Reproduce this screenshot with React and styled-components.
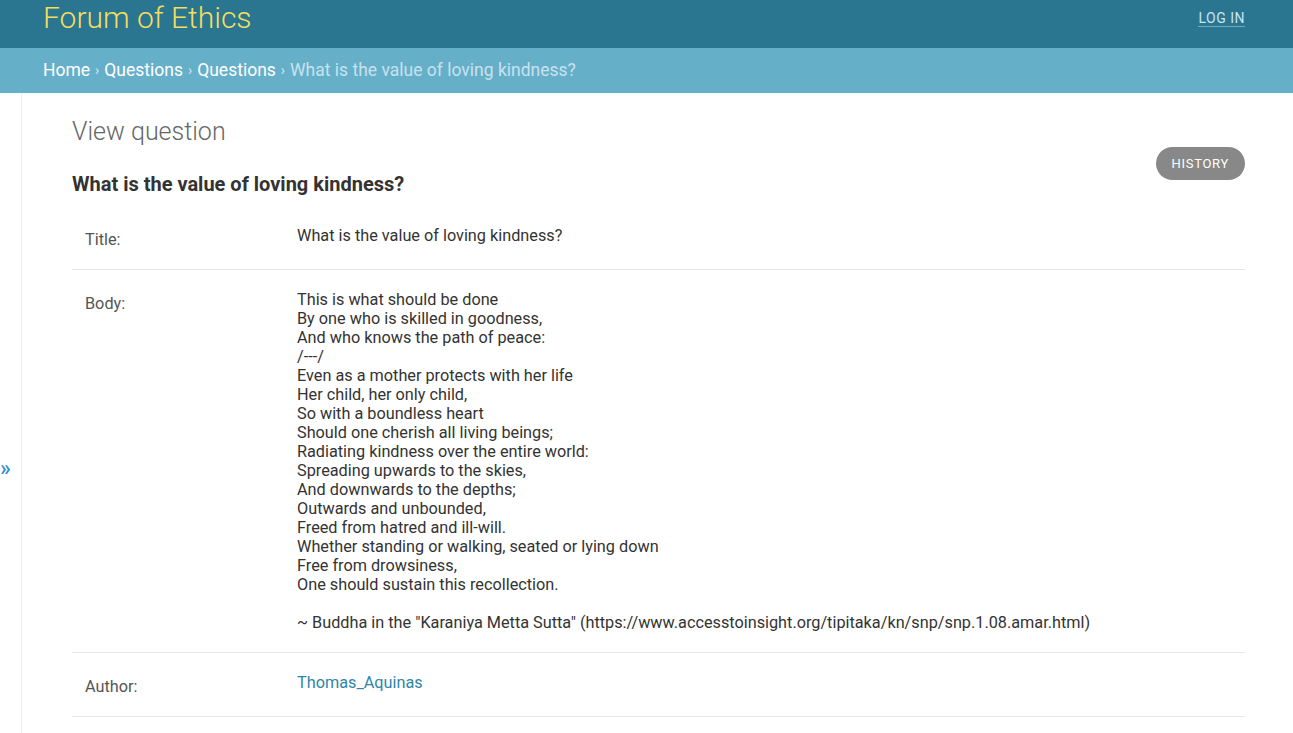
import React from 'react';
import styled, { createGlobalStyle } from 'styled-components';

const GlobalStyle = createGlobalStyle`
  html, body {
    margin: 0;
    padding: 0;
    background: #fff;
    font-family: Roboto, "Liberation Sans", sans-serif;
    color: #333;
  }
`;

const Header = styled.div`
  height: 48px;
  background: #2a7590;
  display: flex;
  align-items: center;
  justify-content: space-between;
  padding: 0 48px 0 43px;
  box-sizing: border-box;
`;

const Brand = styled.div`
  font-size: 30px;
  font-weight: 300;
  color: #f5dd5d;
  margin-top: -13px;
`;

const Login = styled.a`
  font-size: 14px;
  color: #c6e6f2;
  text-transform: uppercase;
  letter-spacing: 0.5px;
  text-decoration: none;
  border-bottom: 1px solid rgba(198, 230, 242, 0.45);
  line-height: 16px;
  margin-top: -12px;
`;

const Crumbs = styled.div`
  height: 45px;
  background: #66afc9;
  display: flex;
  align-items: center;
  padding: 0 43px 2px;
  box-sizing: border-box;
  font-size: 17.5px;
  color: #c8e2ee;
`;

const Crumb = styled.a`
  color: #fff;
  text-decoration: none;
`;

const Sep = styled.span`
  color: #d3e8f0;
  margin: 0 5px;
  font-size: 14px;
`;

const Main = styled.div`
  display: flex;
  min-height: 756px;
`;

const Toggle = styled.div`
  width: 22px;
  border-right: 1px solid #eee;
  display: flex;
  align-items: center;
  color: #2d8fc6;
  font-size: 22px;
  font-weight: 500;
  padding-bottom: 6px;
  box-sizing: border-box;
`;

const Content = styled.div`
  flex: 1;
  padding: 24px 48px 0 50px;
`;

const PageTitle = styled.h1`
  margin: 0;
  font-size: 25px;
  font-weight: 300;
  color: #666;
  line-height: 30px;
`;

const TitleBar = styled.div`
  display: flex;
  justify-content: space-between;
  align-items: flex-start;
`;

const HistoryButton = styled.a`
  margin-top: 30px;
  height: 33px;
  padding: 0 16px;
  border-radius: 17px;
  background: #888;
  color: #fff;
  font-size: 13px;
  letter-spacing: 0.7px;
  text-transform: uppercase;
  display: flex;
  align-items: center;
`;

const Heading = styled.h2`
  margin: -8px 0 10px;
  font-size: 20px;
  font-weight: 700;
  color: #333;
  line-height: 24px;
`;

const Row = styled.div`
  display: flex;
  padding: 20px 13px;
  border-bottom: 1px solid #e6e6e6;
  font-size: 16.25px;
  line-height: 19px;
`;

const Label = styled.div`
  width: 212px;
  flex-shrink: 0;
  padding-top: 4px;
  color: #555;
`;

const Value = styled.div`
  color: #333;
  white-space: pre-line;
`;

const AuthorLink = styled.a`
  color: #2f86a7;
  text-decoration: none;
`;

const body = `This is what should be done
By one who is skilled in goodness,
And who knows the path of peace:
/---/
Even as a mother protects with her life
Her child, her only child,
So with a boundless heart
Should one cherish all living beings;
Radiating kindness over the entire world:
Spreading upwards to the skies,
And downwards to the depths;
Outwards and unbounded,
Freed from hatred and ill-will.
Whether standing or walking, seated or lying down
Free from drowsiness,
One should sustain this recollection.

~ Buddha in the "Karaniya Metta Sutta" (https://www.accesstoinsight.org/tipitaka/kn/snp/snp.1.08.amar.html)`;

export default function App() {
  return (
    <>
      <GlobalStyle />
      <Header>
        <Brand>Forum of Ethics</Brand>
        <Login>Log in</Login>
      </Header>
      <Crumbs>
        <Crumb>Home</Crumb>
        <Sep>›</Sep>
        <Crumb>Questions</Crumb>
        <Sep>›</Sep>
        <Crumb>Questions</Crumb>
        <Sep>›</Sep>
        What is the value of loving kindness?
      </Crumbs>
      <Main>
        <Toggle>»</Toggle>
        <Content>
          <TitleBar>
            <PageTitle>View question</PageTitle>
            <HistoryButton>History</HistoryButton>
          </TitleBar>
          <Heading>What is the value of loving kindness?</Heading>
          <Row>
            <Label>Title:</Label>
            <Value>What is the value of loving kindness?</Value>
          </Row>
          <Row>
            <Label>Body:</Label>
            <Value>{body}</Value>
          </Row>
          <Row>
            <Label>Author:</Label>
            <Value>
              <AuthorLink>Thomas_Aquinas</AuthorLink>
            </Value>
          </Row>
        </Content>
      </Main>
    </>
  );
}
